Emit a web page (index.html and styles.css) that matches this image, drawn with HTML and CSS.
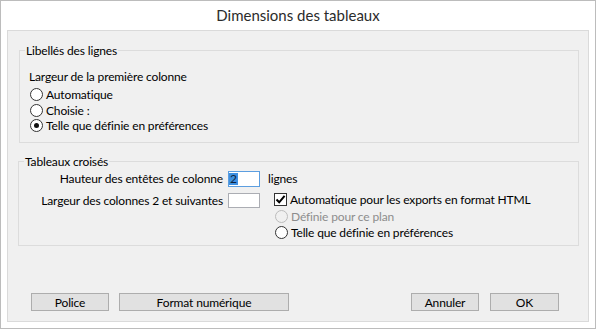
FILE: index.html
```html
<!DOCTYPE html>
<html lang="fr">
<head>
<meta charset="utf-8">
<title>Dimensions des tableaux</title>
<link rel="stylesheet" href="styles.css">
</head>
<body>
<div class="window">
  <div class="titlebar">Dimensions des tableaux</div>
  <div class="panel">
    <fieldset class="group group-lines">
      <legend>Libellés des lignes</legend>
      <div class="caption">Largeur de la première colonne</div>
      <div class="radios">
        <div class="opt"><span class="radio"></span>Automatique</div>
        <div class="opt"><span class="radio"></span>Choisie :</div>
        <div class="opt"><span class="radio checked"></span>Telle que définie en préférences</div>
      </div>
    </fieldset>
    <fieldset class="group group-cross">
      <legend>Tableaux croisés</legend>
      <div class="cross-grid">
        <div class="lbl">Hauteur des entêtes de colonne</div>
        <div class="field focused"><span class="sel">2</span></div>
        <div class="unit">lignes</div>
        <div class="lbl lbl2">Largeur des colonnes 2 et suivantes</div>
        <div class="field field2"></div>
        <div class="options">
          <div class="opt"><span class="check"><svg width="11" height="11" viewBox="0 0 11 11"><path d="M1.5 5.5 L4.2 8.3 L9.6 1.8" fill="none" stroke="#000" stroke-width="2"/></svg></span>Automatique pour les exports en format HTML</div>
          <div class="opt disabled"><span class="radio"></span>Définie pour ce plan</div>
          <div class="opt"><span class="radio"></span>Telle que définie en préférences</div>
        </div>
      </div>
    </fieldset>
    <div class="footer">
      <div class="btns">
        <button class="btn btn-police">Police</button>
        <button class="btn btn-format">Format numérique</button>
      </div>
      <div class="btns">
        <button class="btn btn-annuler">Annuler</button>
        <button class="btn btn-ok">OK</button>
      </div>
    </div>
  </div>
</div>
</body>
</html>
```

FILE: styles.css
```css
* { box-sizing: border-box; }
html, body { margin: 0; padding: 0; background: #ffffff; }
body {
  font-family: "Segoe UI", Lato, "Noto Sans", sans-serif;
  font-size: 12px;
  letter-spacing: -0.15px;
  color: #000;
}
.window {
  width: 596px;
  height: 329px;
  border: 1px solid #bcbcbc;
  background: #ffffff;
  display: flex;
  flex-direction: column;
}
.titlebar {
  height: 29px;
  line-height: 29px;
  text-align: center;
  font-size: 15px;
  letter-spacing: 0;
  color: #2b2b2b;
}
.panel {
  flex: 1;
  margin: 0 6px 6px 6px;
  border: 1px solid #dadada;
  background: #f0f0f0;
  display: flex;
  flex-direction: column;
}
.group {
  border: 1px solid #dcdcdc;
  margin: 0 9px 0 0;
  min-width: 0;
}
.group legend {
  padding: 0 1px;
  line-height: 15px;
  font-size: 12px;
}
.group-lines {
  margin-top: 12px;
  margin-left: 11px;
  padding: 11px 0 8px 9px;
}
.group-lines legend { margin-left: -4px; }
.caption { line-height: 15px; }
.radios { margin-top: 3px; }
.radios .opt { height: 15.5px; }
.opt {
  display: flex;
  align-items: center;
  white-space: nowrap;
}
.radio {
  width: 13px;
  height: 13px;
  border: 1px solid #333;
  border-radius: 50%;
  background: #fff;
  margin: 0 3px 0 1px;
  display: inline-flex;
  align-items: center;
  justify-content: center;
  flex: none;
}
.radio.checked::after {
  content: "";
  width: 5px;
  height: 5px;
  border-radius: 50%;
  background: #111;
}
.check {
  width: 13px;
  height: 13px;
  border: 1px solid #333;
  background: #fff;
  margin-right: 3px;
  display: inline-flex;
  align-items: center;
  justify-content: center;
  flex: none;
}
.check svg { display: block; }
.opt.disabled { color: #8d8d8d; }
.opt.disabled .radio { border-color: #bcbcbc; background: #f0f0f0; }

.group-cross {
  margin-top: 11.5px;
  margin-left: 10px;
  padding: 0 0 3.5px 0;
}
.group-cross legend { margin-left: 5px; }
.cross-grid {
  display: grid;
  grid-template-columns: 204px 32px auto;
  column-gap: 5px;
  row-gap: 5px;
  padding-top: 1.5px;
  align-items: start;
}
.lbl {
  text-align: right;
  line-height: 16px;
  white-space: nowrap;
}
.lbl2 { margin-top: 1px; }
.field {
  height: 16px;
  border: 1px solid #abadb3;
  background: #fff;
  padding: 1px 0 0 0;
  line-height: 12px;
}
.field.focused { border-color: #5c9ee0; }
.field2 { margin-top: 1px; height: 15px; }
.sel {
  display: inline-block;
  background: #3d8fe0;
  color: #10233b;
  padding: 0 1px;
  height: 12px;
  line-height: 12px;
}
.unit {
  line-height: 16px;
  margin-left: 3px;
}
.options { padding-left: 9px; }
.options .opt { height: 16.5px; }

.footer {
  margin-top: auto;
  display: flex;
  justify-content: space-between;
  padding: 0 29px 10px 23px;
}
.btns { display: flex; gap: 10px; }
.btns + .btns { gap: 11px; }
.btn {
  font-family: inherit;
  font-size: 12px;
  letter-spacing: -0.15px;
  color: #000;
  height: 18px;
  line-height: 15px;
  padding: 0;
  border: 1px solid #adadad;
  background: #e1e1e1;
}
.btn-police { width: 78px; }
.btn-format { width: 170px; }
.btn-annuler { width: 68px; }
.btn-ok { width: 69px; }
```
